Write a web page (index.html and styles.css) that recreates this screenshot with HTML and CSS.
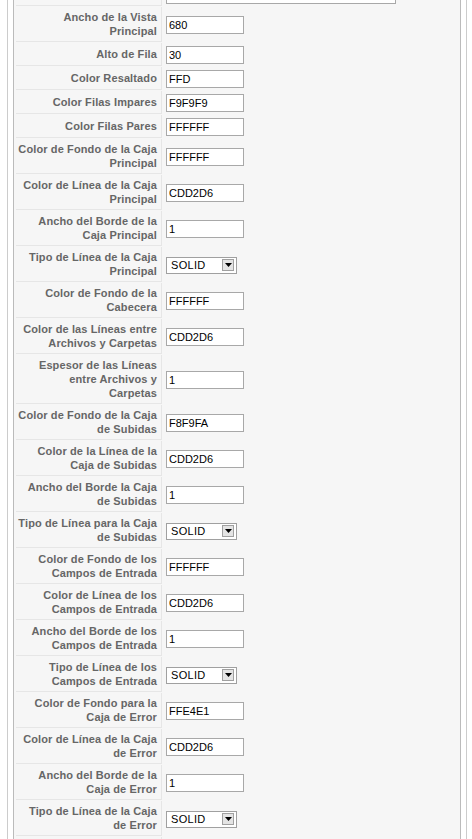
FILE: index.html
```html
<!DOCTYPE html>
<html lang="es">
<head>
<meta charset="utf-8">
<title>Parámetros</title>
<link rel="stylesheet" href="styles.css">
</head>
<body>
<div class="fieldset">
  <div class="paramlist">
    <div class="row"><div class="key"></div><div class="val"><input class="text wide" type="text" value=""></div></div>
    <div class="row"><div class="key">Ancho de la Vista<br>Principal</div><div class="val"><input class="text" type="text" value="680"></div></div>
    <div class="row"><div class="key">Alto de Fila</div><div class="val"><input class="text" type="text" value="30"></div></div>
    <div class="row"><div class="key">Color Resaltado</div><div class="val"><input class="text" type="text" value="FFD"></div></div>
    <div class="row"><div class="key">Color Filas Impares</div><div class="val"><input class="text" type="text" value="F9F9F9"></div></div>
    <div class="row"><div class="key">Color Filas Pares</div><div class="val"><input class="text" type="text" value="FFFFFF"></div></div>
    <div class="row"><div class="key">Color de Fondo de la Caja<br>Principal</div><div class="val"><input class="text" type="text" value="FFFFFF"></div></div>
    <div class="row"><div class="key">Color de Línea de la Caja<br>Principal</div><div class="val"><input class="text" type="text" value="CDD2D6"></div></div>
    <div class="row"><div class="key">Ancho del Borde de la<br>Caja Principal</div><div class="val"><input class="text" type="text" value="1"></div></div>
    <div class="row"><div class="key">Tipo de Línea de la Caja<br>Principal</div><div class="val"><div class="select"><span class="sel-text">SOLID</span><span class="sel-btn"><svg width="7" height="4" viewBox="0 0 7 4"><path d="M0 0h7L3.5 4z" fill="#000"/></svg></span></div></div></div>
    <div class="row"><div class="key">Color de Fondo de la<br>Cabecera</div><div class="val"><input class="text" type="text" value="FFFFFF"></div></div>
    <div class="row"><div class="key">Color de las Líneas entre<br>Archivos y Carpetas</div><div class="val"><input class="text" type="text" value="CDD2D6"></div></div>
    <div class="row"><div class="key">Espesor de las Líneas<br>entre Archivos y<br>Carpetas</div><div class="val"><input class="text" type="text" value="1"></div></div>
    <div class="row"><div class="key">Color de Fondo de la Caja<br>de Subidas</div><div class="val"><input class="text" type="text" value="F8F9FA"></div></div>
    <div class="row"><div class="key">Color de la Línea de la<br>Caja de Subidas</div><div class="val"><input class="text" type="text" value="CDD2D6"></div></div>
    <div class="row"><div class="key">Ancho del Borde la Caja<br>de Subidas</div><div class="val"><input class="text" type="text" value="1"></div></div>
    <div class="row"><div class="key">Tipo de Línea para la Caja<br>de Subidas</div><div class="val"><div class="select"><span class="sel-text">SOLID</span><span class="sel-btn"><svg width="7" height="4" viewBox="0 0 7 4"><path d="M0 0h7L3.5 4z" fill="#000"/></svg></span></div></div></div>
    <div class="row"><div class="key">Color de Fondo de los<br>Campos de Entrada</div><div class="val"><input class="text" type="text" value="FFFFFF"></div></div>
    <div class="row"><div class="key">Color de Línea de los<br>Campos de Entrada</div><div class="val"><input class="text" type="text" value="CDD2D6"></div></div>
    <div class="row"><div class="key">Ancho del Borde de los<br>Campos de Entrada</div><div class="val"><input class="text" type="text" value="1"></div></div>
    <div class="row"><div class="key">Tipo de Línea de los<br>Campos de Entrada</div><div class="val"><div class="select"><span class="sel-text">SOLID</span><span class="sel-btn"><svg width="7" height="4" viewBox="0 0 7 4"><path d="M0 0h7L3.5 4z" fill="#000"/></svg></span></div></div></div>
    <div class="row"><div class="key">Color de Fondo para la<br>Caja de Error</div><div class="val"><input class="text" type="text" value="FFE4E1"></div></div>
    <div class="row"><div class="key">Color de Línea de la Caja<br>de Error</div><div class="val"><input class="text" type="text" value="CDD2D6"></div></div>
    <div class="row"><div class="key">Ancho del Borde de la<br>Caja de Error</div><div class="val"><input class="text" type="text" value="1"></div></div>
    <div class="row"><div class="key">Tipo de Línea de la Caja<br>de Error</div><div class="val"><div class="select"><span class="sel-text">SOLID</span><span class="sel-btn"><svg width="7" height="4" viewBox="0 0 7 4"><path d="M0 0h7L3.5 4z" fill="#000"/></svg></span></div></div></div>
    <div class="row"><div class="key">&nbsp;<br>&nbsp;</div><div class="val"></div></div>
  </div>
</div>
</body>
</html>
```

FILE: styles.css
```css
html, body {
  margin: 0;
  padding: 0;
  background: #fff;
  overflow: hidden;
}

body {
  font-family: "Liberation Sans", Arial, sans-serif;
  font-size: 11px;
  color: #333;
}

.fieldset {
  box-sizing: border-box;
  width: 460px;
  margin: -21px 0 0 7px;
  border: 1px solid #ccc;
  padding: 0 5px 10px;
}

.paramlist {
  border: 1px solid #bbb;
  background: #f6f6f6;
  padding: 2px;
  display: flex;
  flex-direction: column;
  gap: 1px;
}

.row {
  display: grid;
  grid-template-columns: 146px 1fr;
}

.key {
  box-sizing: border-box;
  min-height: 23px;
  display: flex;
  align-items: center;
  justify-content: flex-end;
  text-align: right;
  padding: 3px 4px 3px 0;
  line-height: 14px;
  font-weight: bold;
  letter-spacing: 0.12px;
  color: #666;
  white-space: nowrap;
  background: #f6f6f6;
  border-right: 1px solid #e6e6e6;
  border-bottom: 1px solid #e6e6e6;
}

.val {
  display: flex;
  align-items: center;
  padding: 1px 0 0 4px;
}

.text {
  box-sizing: border-box;
  width: 78px;
  height: 18px;
  margin: 0;
  padding: 0 2px;
  border: 1px solid #a8a8a8;
  background: #fff;
  font-family: "Liberation Sans", Arial, sans-serif;
  font-size: 11px;
  color: #000;
  outline: none;
}

.text.wide {
  width: 230px;
}

.select {
  box-sizing: border-box;
  width: 71px;
  height: 17px;
  border: 1px solid #a0a0a0;
  background: #fff;
  display: flex;
  align-items: center;
  justify-content: space-between;
  padding: 0 2px 0 4px;
}

.sel-text {
  font-size: 11px;
  color: #000;
  letter-spacing: 0.3px;
}

.sel-btn {
  box-sizing: border-box;
  width: 12px;
  height: 12px;
  border: 1px solid #a0a0a0;
  background: #e4e4e4;
  display: flex;
  align-items: center;
  justify-content: center;
}

.sel-btn svg {
  display: block;
}
```
